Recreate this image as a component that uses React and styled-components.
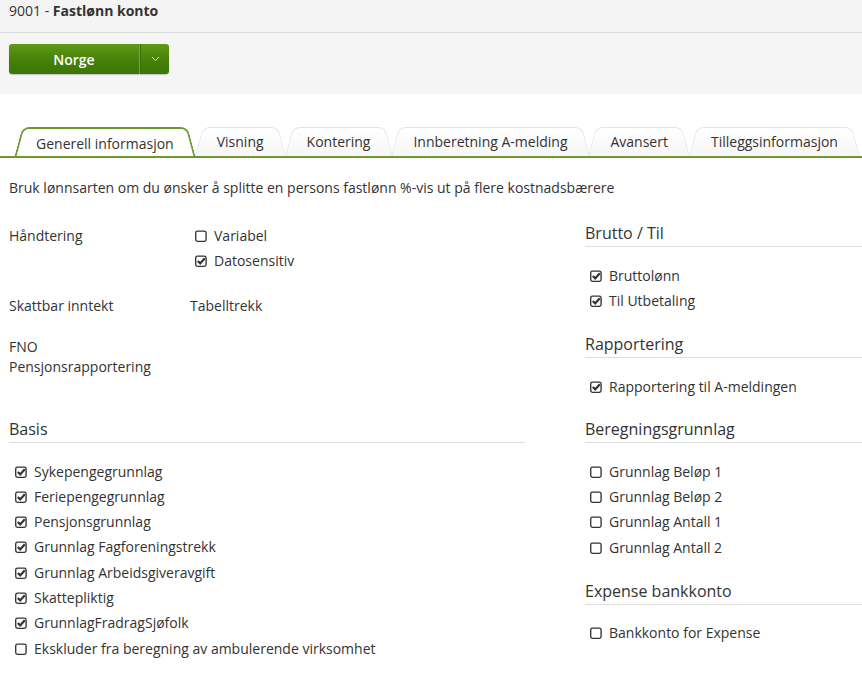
import styled, { createGlobalStyle } from "styled-components";

const GlobalStyle = createGlobalStyle`
	body {
		margin: 0;
		background: #ffffff;
		font-family: "Open Sans", "Noto Sans", sans-serif;
		font-size: 14px;
		color: #333333;
	}
	* {
		box-sizing: border-box;
	}
`;

const tabs = [
	"Generell informasjon",
	"Visning",
	"Kontering",
	"Innberetning A-melding",
	"Avansert",
	"Tilleggsinformasjon",
];

const basis = [
	["Sykepengegrunnlag", true],
	["Feriepengegrunnlag", true],
	["Pensjonsgrunnlag", true],
	["Grunnlag Fagforeningstrekk", true],
	["Grunnlag Arbeidsgiveravgift", true],
	["Skattepliktig", true],
	["GrunnlagFradragSjøfolk", true],
	["Ekskluder fra beregning av ambulerende virksomhet", false],
];

function Box({ checked }) {
	return (
		<svg width="12" height="12" viewBox="0 0 12 12">
			<rect
				x="0.7"
				y="1.1"
				width="10.4"
				height="10.2"
				rx="1.8"
				fill="none"
				stroke="#333"
				strokeWidth="1.35"
			/>
			{checked && (
				<path
					d="M2.8 6 L5.2 8.4 L9.8 3.3"
					fill="none"
					stroke="#333"
					strokeWidth="2.2"
					strokeLinejoin="miter"
				/>
			)}
		</svg>
	);
}

function Check({ label, checked, inset }) {
	return (
		<CheckRow $inset={inset}>
			<Box checked={checked} />
			<span>{label}</span>
		</CheckRow>
	);
}

export default function App() {
	return (
		<>
			<GlobalStyle />
			<TitleBar>
				9001 - <b>Fastlønn konto</b>
			</TitleBar>
			<Toolbar>
				<SplitButton>
					<MainPart>Norge</MainPart>
					<CaretPart>
						<svg width="9" height="6" viewBox="0 0 9 6">
							<path d="M1 1 L4.5 4.5 L8 1" fill="none" stroke="#d8e8c8" strokeWidth="1" />
						</svg>
					</CaretPart>
				</SplitButton>
			</Toolbar>
			<TabBar>
				{tabs.map((t, i) => (
					<Tab key={t} $active={i === 0} $z={tabs.length - i}>
						{t}
					</Tab>
				))}
			</TabBar>
			<Intro>
				Bruk lønnsarten om du ønsker å splitte en persons fastlønn %-vis ut på
				flere kostnadsbærere
			</Intro>
			<Columns>
				<div>
					<FieldRow>
						<Label>Håndtering</Label>
						<div>
							<Check label="Variabel" checked={false} inset={5} />
							<Check label="Datosensitiv" checked inset={5} />
						</div>
					</FieldRow>
					<FieldRow $top={19}>
						<Label>Skattbar inntekt</Label>
						<Value>Tabelltrekk</Value>
					</FieldRow>
					<FieldRow $top={21}>
						<Label>
							FNO
							<br />
							Pensjonsrapportering
						</Label>
					</FieldRow>
					<Section $top={41}>
						<Heading>Basis</Heading>
						<List $top={19}>
							{basis.map(([l, c]) => (
								<Check key={l} label={l} checked={c} inset={6} />
							))}
						</List>
					</Section>
				</div>
				<RightColumn>
					<Section>
						<Heading>Brutto / Til</Heading>
						<List $top={19}>
							<Check label="Bruttolønn" checked inset={5} />
							<Check label="Til Utbetaling" checked inset={5} />
						</List>
					</Section>
					<Section $top={19}>
						<Heading>Rapportering</Heading>
						<List $top={19}>
							<Check label="Rapportering til A-meldingen" checked inset={5} />
						</List>
					</Section>
					<Section $top={18}>
						<Heading>Beregningsgrunnlag</Heading>
						<List $top={19}>
							<Check label="Grunnlag Beløp 1" checked={false} inset={5} />
							<Check label="Grunnlag Beløp 2" checked={false} inset={5} />
							<Check label="Grunnlag Antall 1" checked={false} inset={5} />
							<Check label="Grunnlag Antall 2" checked={false} inset={5} />
						</List>
					</Section>
					<Section $top={20}>
						<Heading>Expense bankkonto</Heading>
						<List>
							<Check label="Bankkonto for Expense" checked={false} inset={5} />
						</List>
					</Section>
				</RightColumn>
			</Columns>
		</>
	);
}

const TitleBar = styled.div`
	height: 33px;
	padding: 1px 9px 0;
	line-height: 20px;
	background: #f4f4f4;
	border-bottom: 1px solid #dcdcdc;
	color: #333;

	b {
		font-weight: 700;
	}
`;

const Toolbar = styled.div`
	height: 61px;
	padding: 11px 9px 0;
	background: #f5f5f5;
`;

const SplitButton = styled.div`
	display: flex;
	width: 160px;
	height: 30px;
	border-radius: 3px;
	overflow: hidden;
	background: linear-gradient(#5e9915, #447f08 60%, #3c7605);
	box-shadow: 0 1px 1px rgba(0, 0, 0, 0.2);
`;

const MainPart = styled.div`
	flex: 1;
	display: flex;
	align-items: center;
	justify-content: center;
	color: #ffffff;
	font-weight: 600;
	font-size: 14px;
	border-right: 1px solid #75a63e;
`;

const CaretPart = styled.div`
	width: 29px;
	display: flex;
	align-items: center;
	justify-content: center;
	border-left: 1px solid #3a6f06;
`;

const TabBar = styled.div`
	display: flex;
	margin-top: 33px;
	padding-left: 14px;
	height: 31px;
	border-bottom: 2px solid #6c9a30;
	overflow: hidden;
`;

const Tab = styled.div`
	position: relative;
	z-index: ${(p) => (p.$active ? 20 : p.$z)};
	isolation: isolate;
	height: ${(p) => (p.$active ? "31px" : "29px")};
	margin-right: -1px;
	padding: 0 22px;
	display: flex;
	align-items: center;
	padding-top: ${(p) => (p.$active ? "2px" : "0")};
	white-space: nowrap;
	color: #333;
	font-size: 14px;

	&::before,
	&::after {
		content: "";
		position: absolute;
		top: 0;
		bottom: 0;
		z-index: -1;
		transform-origin: bottom;
		background: ${(p) =>
			p.$active ? "#ffffff" : "linear-gradient(#ffffff, #f6f6f6)"};
		border-top: ${(p) => (p.$active ? "2px solid #6c9a30" : "1px solid #e4e4e4")};
	}

	&::before {
		left: 0;
		right: 40%;
		transform: skewX(-15deg);
		border-left: ${(p) => (p.$active ? "2px solid #6c9a30" : "1px solid #e4e4e4")};
		border-top-left-radius: 7px;
	}

	&::after {
		left: 40%;
		right: 0;
		transform: skewX(15deg);
		border-right: ${(p) => (p.$active ? "2px solid #6c9a30" : "1px solid #e4e4e4")};
		border-top-right-radius: 7px;
	}
`;

const Intro = styled.p`
	margin: 20px 0 0;
	padding: 0 9px;
	line-height: 20px;
`;

const Columns = styled.div`
	display: grid;
	grid-template-columns: 516px 1fr;
	column-gap: 60px;
	padding-left: 9px;
	margin-top: 24px;

	& > div:first-child {
		padding-top: 4px;
	}
`;

const RightColumn = styled.div``;

const FieldRow = styled.div`
	display: grid;
	grid-template-columns: 181px 1fr;
	margin-top: ${(p) => p.$top || 0}px;
	line-height: 20px;
`;

const Label = styled.div`
	line-height: 20px;
`;

const Value = styled.div`
	line-height: 20px;
`;

const Section = styled.section`
	margin-top: ${(p) => p.$top || 0}px;
`;

const Heading = styled.h3`
	margin: 0;
	font-size: 16px;
	font-weight: 400;
	line-height: 22px;
	padding-bottom: 2px;
	border-bottom: 1px solid #dddddd;
	color: #333;
`;

const List = styled.div`
	margin-top: ${(p) => p.$top || 18}px;
`;

const CheckRow = styled.div`
	display: flex;
	align-items: center;
	gap: 7px;
	height: 25.3px;
	padding-left: ${(p) => p.$inset}px;
	margin-top: -2.65px;
	margin-bottom: 2.65px;
	line-height: 20px;
	color: #333;
	white-space: nowrap;

	svg {
		flex: none;
	}
`;
